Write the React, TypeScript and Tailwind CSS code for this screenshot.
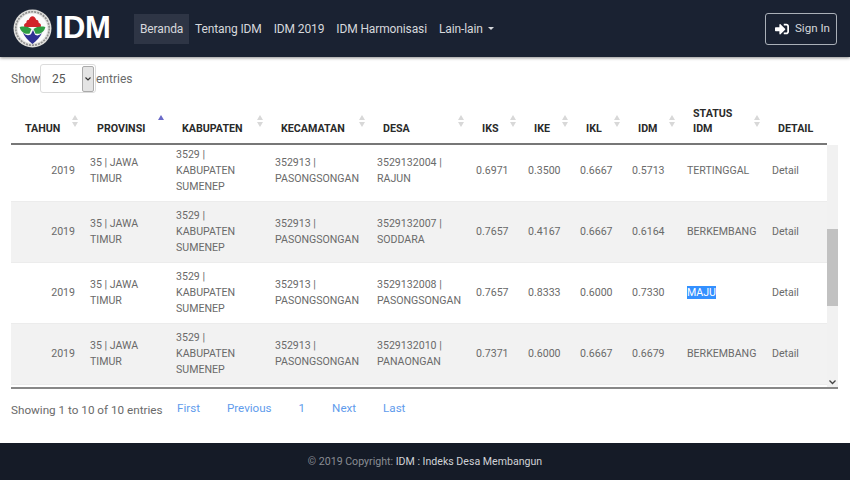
import { FaSignInAlt } from "react-icons/fa";

const widths = [73, 86, 99, 102, 99, 52, 52, 52, 55, 85, 61];

const rows = [
  { desa: "3529132004 | RAJUN", iks: "0.6971", ike: "0.3500", ikl: "0.6667", idm: "0.5713", status: "TERTINGGAL" },
  { desa: "3529132007 | SODDARA", iks: "0.7657", ike: "0.4167", ikl: "0.6667", idm: "0.6164", status: "BERKEMBANG" },
  { desa: "3529132008 | PASONGSONGAN", iks: "0.7657", ike: "0.8333", ikl: "0.6000", idm: "0.7330", status: "MAJU" },
  { desa: "3529132010 | PANAONGAN", iks: "0.7371", ike: "0.6000", ikl: "0.6667", idm: "0.6679", status: "BERKEMBANG" },
];

const heads = ["TAHUN", "PROVINSI", "KABUPATEN", "KECAMATAN", "DESA", "IKS", "IKE", "IKL", "IDM", "STATUS IDM", "DETAIL"];

function Cols() {
  return (
    <colgroup>
      {widths.map((w, i) => (
        <col key={i} style={{ width: w }} />
      ))}
    </colgroup>
  );
}

function Logo() {
  return (
    <svg width="39" height="39" viewBox="0 0 38 38" className="shrink-0">
      <circle cx="19" cy="19" r="18.5" fill="#dfdfdc" />
      <circle cx="19" cy="19" r="16.3" fill="none" stroke="#8f8f8f" strokeWidth="1.6" strokeDasharray="2 1" />
      <circle cx="19" cy="19" r="14.6" fill="#fbfbfb" />
      <path d="M13 13.5 Q13 10.5 15.5 10.5 Q16.5 7 19 7 Q21.5 7 22.5 10.5 Q25 10.5 25 13.5 Q28 14.5 27 17.5 L11 17.5 Q10 14.5 13 13.5 Z" fill="#d2232a" />
      <path d="M6.5 17.5 C10.5 16.5 15 17 18 19.5 L16 24 C11.5 25 7.5 22.5 6.5 17.5 Z" fill="#2f9e44" />
      <path d="M31.5 17.5 C27.5 16.5 23 17 20 19.5 L22 24 C26.5 25 30.5 22.5 31.5 17.5 Z" fill="#2f9e44" />
      <path d="M9.5 23 C12 25.5 15 26.5 17.5 24.5 L19.5 20.5 L21.5 25 C24 26.5 26.5 25.5 28.5 23 C26.5 27.5 23 31 19 34 C15 31 11.5 27.5 9.5 23 Z" fill="#2e3192" />
    </svg>
  );
}

function SortIcon({ active }: { active?: boolean }) {
  return (
    <span className="absolute right-[6px] top-[15px] flex flex-col gap-[2px]">
      <span className={`h-0 w-0 border-x-[3px] border-b-[5px] border-x-transparent ${active ? "border-b-[#6a6ac8]" : "border-b-[#d8d8d8]"}`} />
      <span className={`h-0 w-0 border-x-[3px] border-t-[5px] border-x-transparent ${active ? "border-t-transparent" : "border-t-[#d8d8d8]"}`} />
    </span>
  );
}

export default function App() {
  return (
    <div className="flex h-[480px] w-[850px] flex-col overflow-hidden bg-white font-['Roboto',sans-serif] text-[#6a6a6a]">
      <header className="z-10 flex h-[57px] shrink-0 items-center bg-[#1a2232] pl-[13px] pr-[13px] shadow-[0_1px_3px_rgba(0,0,0,0.45)]">
        <Logo />
        <span className="ml-[3px] w-[79px] font-['Liberation_Sans',sans-serif] text-[31px] font-bold tracking-[-0.5px] text-white">IDM</span>
        <nav className="flex items-center text-[12px] tracking-[-0.12px] text-[#d6d8dc]">
          <a className="flex h-[30px] w-[55px] items-center bg-[#2e3545] px-[6px]">Beranda</a>
          <a className="flex h-[30px] items-center px-[6px]">Tentang IDM</a>
          <a className="flex h-[30px] items-center px-[6px]">IDM 2019</a>
          <a className="flex h-[30px] items-center px-[6px]">IDM Harmonisasi</a>
          <a className="flex h-[30px] items-center px-[6px]">
            Lain-lain
            <span className="ml-[5px] h-0 w-0 border-x-[3px] border-t-[3px] border-x-transparent border-t-[#d6d8dc]" />
          </a>
        </nav>
        <button className="ml-auto flex h-[32px] w-[72px] items-center justify-end gap-[6px] rounded-[3px] border border-[#aab0b8] pr-[6px] text-[11.6px] text-[#d6d8dc]">
          <FaSignInAlt className="text-[14px] text-white" />
          Sign In
        </button>
      </header>

      <main className="flex-1 px-[11px] pt-[7px]">
        <div className="flex h-[29px] items-center text-[12px]">
          <span className="w-[29px]">Show</span>
          <div className="flex h-[29px] w-[56px] items-center rounded-[3px] border border-[#dcdcdc] bg-white pl-[11px] pr-[1px] text-[#555]">
            <span className="flex-1">25</span>
            <span className="flex h-[26px] w-[12px] items-center justify-center rounded-[2px] border border-[#aaa] bg-[#e4e4e4]">
              <svg width="6" height="4" viewBox="0 0 6 4">
                <path d="M0.5 0.5 L3 3 L5.5 0.5" fill="none" stroke="#333" strokeWidth="1.2" />
              </svg>
            </span>
          </div>
          <span>entries</span>
        </div>

        <table className="mt-[7px] table-fixed border-b-2 border-[#777] text-[10.7px] font-bold leading-[15px] text-[#2a2a2a]" style={{ width: 816 }}>
          <Cols />
          <thead>
            <tr className="h-[44px]">
              {heads.map((h, i) => (
                <th key={h} className="relative px-[12px] pb-[7px] pt-[5px] text-left align-bottom font-bold">
                  <span className={i === 0 ? "pl-[2px]" : i === 1 ? "pl-[1px]" : ""}>{h}</span>
                  {i < 10 && <SortIcon active={i === 1} />}
                </th>
              ))}
            </tr>
          </thead>
        </table>

        <div className="flex h-[244px] w-[827px] border-b-2 border-[#888]">
          <div className="h-full w-[816px] overflow-hidden">
            <table className="-mt-[4px] table-fixed text-[10.6px] leading-[16px]" style={{ width: 816 }}>
              <Cols />
              <tbody>
                {rows.map((r, i) => (
                  <tr key={r.desa} className={`border-b border-[#ececec] ${i === 0 ? "h-[60px]" : "h-[61px]"} ${i % 2 === 1 ? "bg-[#f2f2f2]" : "bg-white"}`}>
                    <td className="pr-[9px] text-right">2019</td>
                    <td className="px-[6px]">35 | JAWA TIMUR</td>
                    <td className="px-[6px]">3529 | KABUPATEN SUMENEP</td>
                    <td className="px-[6px]">352913 | PASONGSONGAN</td>
                    <td className="px-[6px]">{r.desa}</td>
                    <td className="px-[6px]">{r.iks}</td>
                    <td className="px-[6px]">{r.ike}</td>
                    <td className="px-[6px]">{r.ikl}</td>
                    <td className="px-[6px]">{r.idm}</td>
                    <td className="px-[6px]">
                      {r.status === "MAJU" ? <span className="bg-[#3390ff] text-white">MAJU</span> : r.status}
                    </td>
                    <td className="px-[6px]">Detail</td>
                  </tr>
                ))}
              </tbody>
            </table>
          </div>
          <div className="flex h-full w-[11px] flex-col items-center bg-[#f1f1f1]">
            <div className="mt-[84px] h-[77px] w-[11px] bg-[#c1c1c1]" />
            <svg width="7" height="5" viewBox="0 0 7 5" className="mt-auto mb-[2px]">
              <path d="M0.5 0.5 L3.5 3.5 L6.5 0.5" fill="none" stroke="#444" strokeWidth="1.3" />
            </svg>
          </div>
        </div>

        <div className="mt-[11px] flex items-start text-[11.6px] leading-[16px]">
          <span className="mt-[2px] w-[166px] text-[11.7px]">Showing 1 to 10 of 10 entries</span>
          <div className="flex gap-[27px] text-[#5f9cec]">
            <a>First</a>
            <a>Previous</a>
            <a>1</a>
            <a>Next</a>
            <a>Last</a>
          </div>
        </div>
      </main>

      <footer className="flex h-[37px] shrink-0 items-center justify-center bg-[#151b27] text-[10.6px] text-[#8a8d93]">
        <span>© 2019 Copyright:&nbsp;</span>
        <span className="text-[#d0d2d6]">IDM : Indeks Desa Membangun</span>
      </footer>
    </div>
  );
}
